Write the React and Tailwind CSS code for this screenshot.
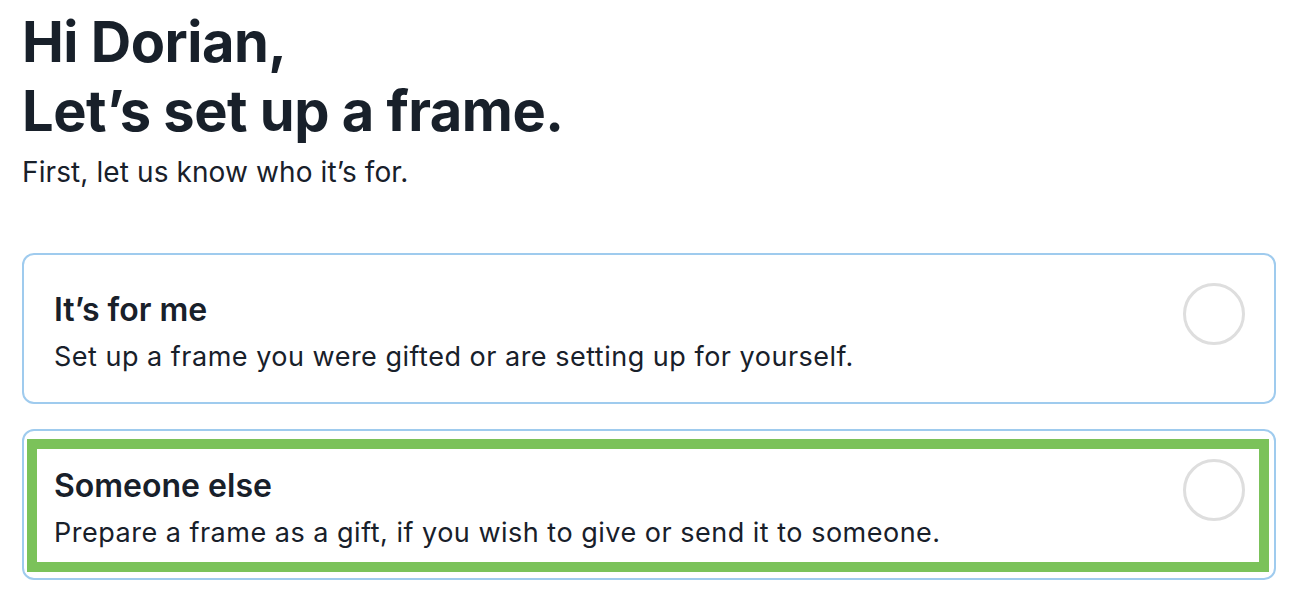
import React, { useState } from 'react';

const options = [
  {
    id: 'me',
    title: 'It’s for me',
    desc: 'Set up a frame you were gifted or are setting up for yourself.',
  },
  {
    id: 'else',
    title: 'Someone else',
    desc: 'Prepare a frame as a gift, if you wish to give or send it to someone.',
    highlight: true,
  },
];

export default function App() {
  const [selected, setSelected] = useState(null);

  return (
    <div className="min-h-screen bg-white pl-[22px] pr-4 pt-2 text-[#18202a]" style={{ fontFamily: 'Inter, "Noto Sans", sans-serif' }}>
      <h1 className="text-[56px] font-bold leading-[69px] tracking-[-0.5px]">
        Hi Dorian,
        <br />
        Let’s set up a frame.
      </h1>
      <p className="mt-[9px] text-[28px] leading-[34px] tracking-[0.1px]">First, let us know who it’s for.</p>

      <div className="mt-[64px] flex flex-col gap-[25px]">
        {options.map((o) => (
          <button
            key={o.id}
            type="button"
            onClick={() => setSelected(o.id)}
            className="relative flex h-[151px] w-full items-start justify-between rounded-[12px] border-2 border-[#9fcbee] bg-white pl-[30px] pr-[29px] pt-[28px] text-left"
          >
            <div className="pt-[7px]">
              <div className="text-[32px] font-semibold leading-[40px]">{o.title}</div>
              <div className="mt-[9px] text-[27px] leading-[36px] tracking-[0.5px]">{o.desc}</div>
            </div>
            <span
              className={`h-[62px] w-[62px] shrink-0 rounded-full border-[3px] ${
                selected === o.id ? 'border-[#3b82f6] bg-[#3b82f6]' : 'border-[#dedede]'
              }`}
            />
            {o.highlight && (
              <span className="pointer-events-none absolute bottom-[6px] left-[3px] right-[5px] top-[8px] border-[10px] border-[#7bc25a]" />
            )}
          </button>
        ))}
      </div>
    </div>
  );
}
